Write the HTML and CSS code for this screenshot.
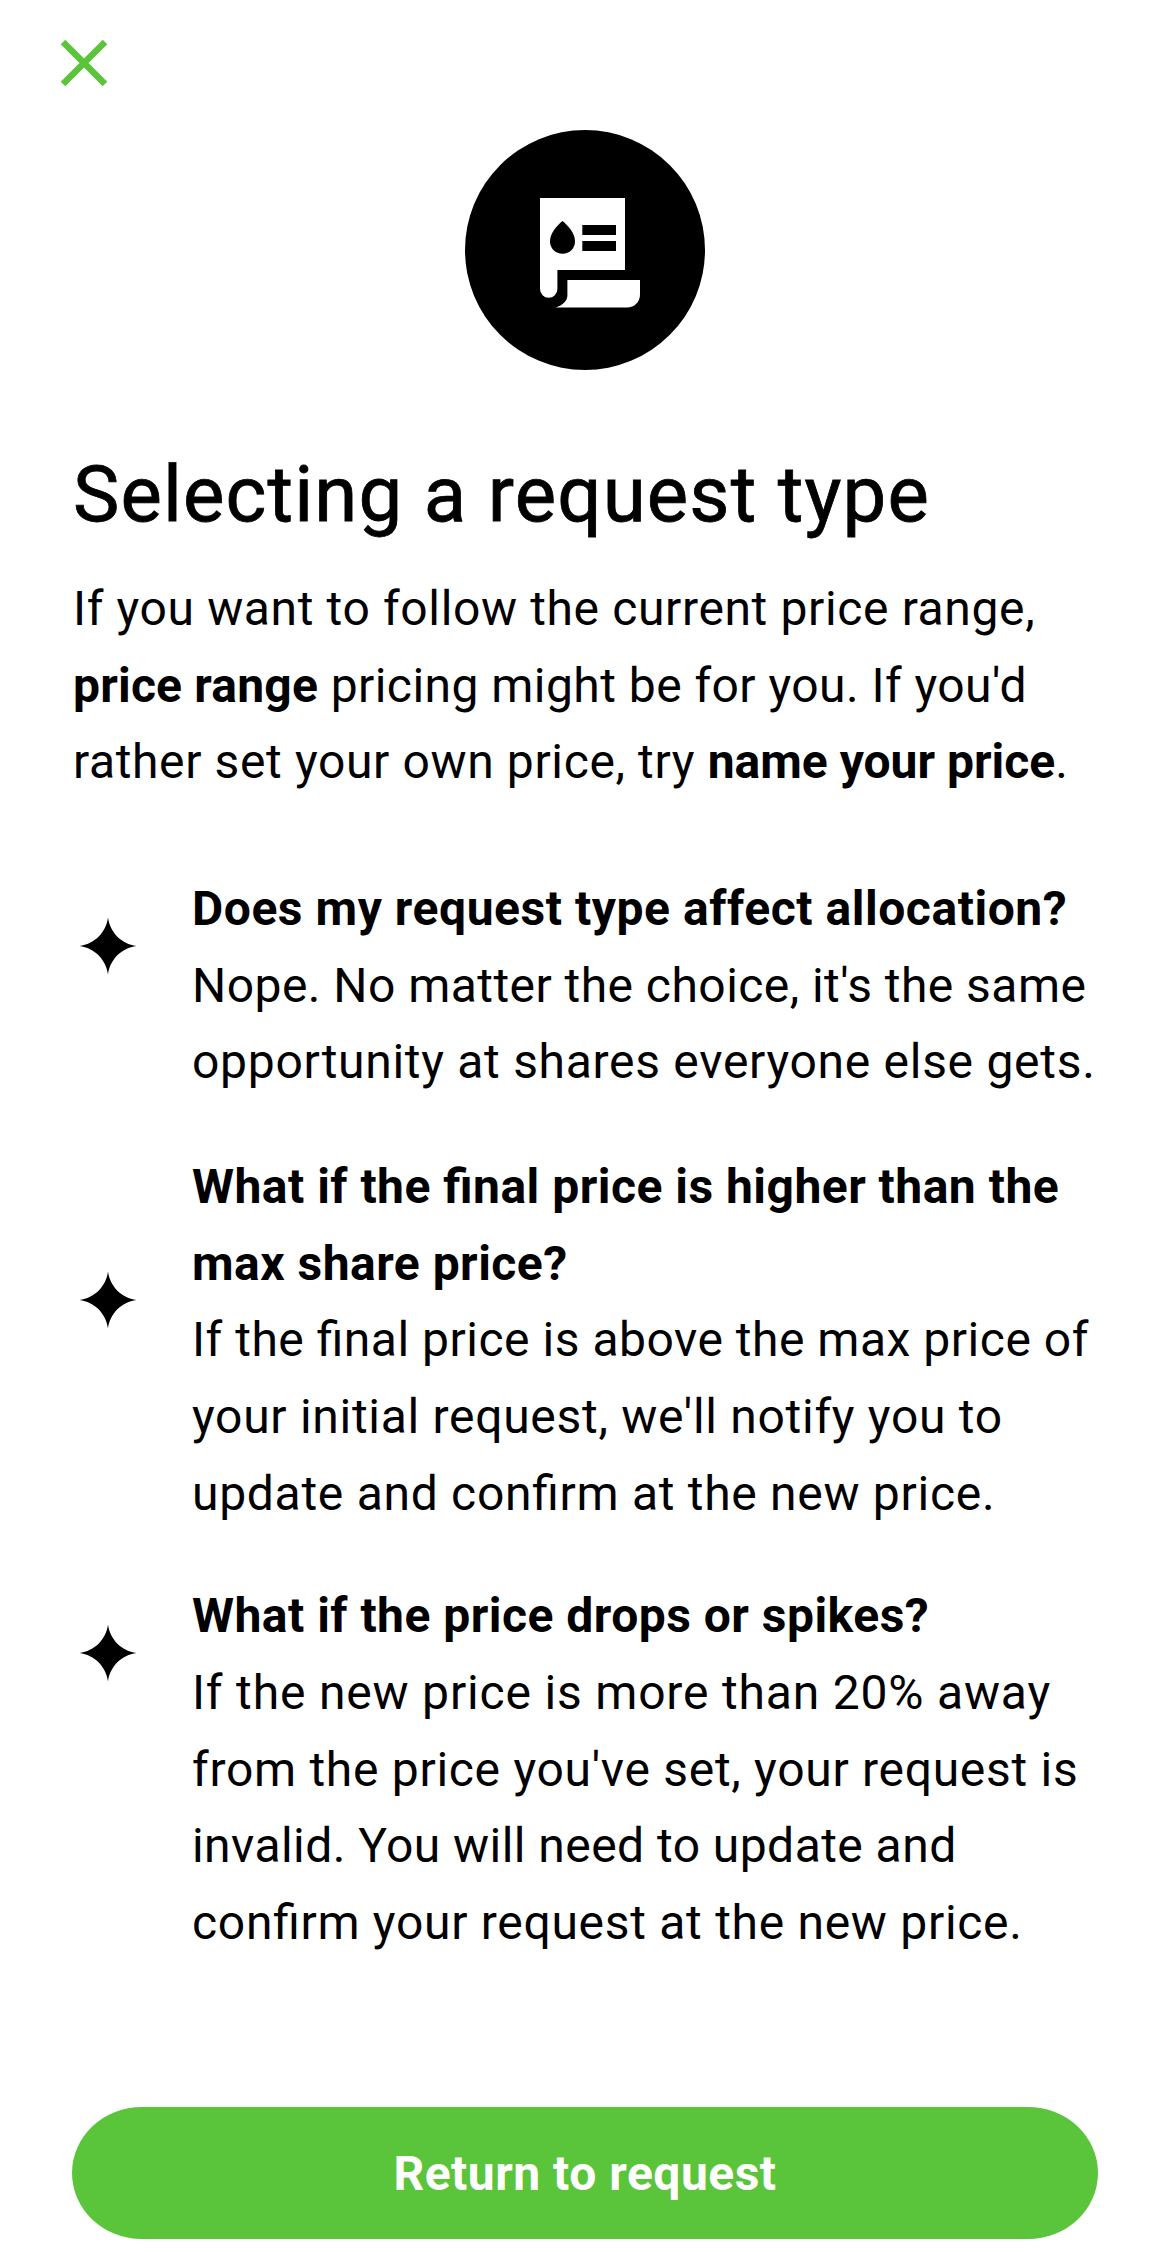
FILE: index.html
```
<!DOCTYPE html>
<html lang="en">
<head>
<meta charset="utf-8">
<title>Selecting a request type</title>
<link rel="stylesheet" href="styles.css">
</head>
<body>
<header class="topbar">
  <button class="close" aria-label="Close">
    <svg width="48" height="48" viewBox="0 0 48 48"><path d="M3 3 45 45M45 3 3 45" fill="none" stroke="#5ac53a" stroke-width="6.5"/></svg>
  </button>
</header>
<main class="content">
  <svg class="hero" width="240" height="240" viewBox="0 0 240 240">
    <circle cx="120" cy="120" r="120" fill="#000"/>
    <path fill="#fff" d="M75 68H160V140H92.4V159a8.7 8.7 0 0 1-17.4 0Z"/>
    <path fill="#fff" d="M102.4 150H175V164.500C175 172 169.500 177.600 162 177.600H90.700C98 175 102.400 171 102.400 165Z"/>
    <path fill="#000" d="M97.500 91C92 95.500 85 103 85 111.500C85 118.500 90.500 123.800 97.500 123.800S110 118.500 110 111.500C110 103 103 95.500 97.500 91Z"/>
    <path fill="#000" d="M117.300 95H151V105H117.300ZM117.300 111H151V121H117.300Z"/>
  </svg>
  <h1 class="title">Selecting a request type</h1>
  <p class="intro">If you want to follow the current price range,<br><b class="term">price range</b> <span class="snug">pricing might be for you. If you'd</span><br>rather set your own price, try <b class="term tight">name your price</b>.</p>
  <ul class="faq">
    <li class="item">
      <svg class="star" width="58" height="58" viewBox="0 0 60 60"><path d="M30 0.500C32 16 44 28 59.500 30C44 32 32 44 30 59.500C28 44 16 32 0.500 30C16 28 28 16 30 0.500Z"/></svg>
      <div>
        <h2 class="question">Does my request type affect allocation?</h2>
        <p class="answer"><span class="snug">Nope. No matter the choice, it's the same</span><br>opportunity at shares everyone else gets.</p>
      </div>
    </li>
    <li class="item item-tall">
      <svg class="star" width="58" height="58" viewBox="0 0 60 60"><path d="M30 0.500C32 16 44 28 59.500 30C44 32 32 44 30 59.500C28 44 16 32 0.500 30C16 28 28 16 30 0.500Z"/></svg>
      <div>
        <h2 class="question snug">What if the final price is higher than the<br>max share price?</h2>
        <p class="answer"><span class="snug-plus">If the final price is above the max price of</span><br>your initial request, we'll notify you to<br>update and confirm at the new price.</p>
      </div>
    </li>
    <li class="item">
      <svg class="star" width="58" height="58" viewBox="0 0 60 60"><path d="M30 0.500C32 16 44 28 59.500 30C44 32 32 44 30 59.500C28 44 16 32 0.500 30C16 28 28 16 30 0.500Z"/></svg>
      <div>
        <h2 class="question snug">What if the price drops or spikes?</h2>
        <p class="answer"><span class="airy">If the new price is more than 20% away</span><br>from the price you've set, your request is<br><span class="snug">invalid. You will need to update and</span><br>confirm your request at the new price.</p>
      </div>
    </li>
  </ul>
  <button class="cta">Return to request</button>
</main>
</body>
</html>
```
FILE: styles.css
```
* { box-sizing: border-box; margin: 0; padding: 0; }

body {
  background: #fff;
  color: #000;
  font: 400 48px/76.67px Roboto, "Liberation Sans", sans-serif;
  font-feature-settings: "liga" 1;
  white-space: nowrap;
}

button { border: 0; background: none; font: inherit; }

.topbar { height: 130px; padding: 39px 60px 0; }
.close { display: block; width: 48px; height: 48px; }
.close svg { display: block; }

.content {
  display: flex;
  flex-direction: column;
  padding: 0 72px;
}

.hero { align-self: center; }

.title {
  margin-top: 77px;
  padding-left: 1px;
  font-size: 78px;
  font-weight: 400;
  line-height: 96px;
  letter-spacing: 1.13px;
  -webkit-text-stroke: 0.8px #000;
}

.intro { margin-top: 28px; padding-left: 1px; letter-spacing: 0.63px; }
.term { font-weight: 700; letter-spacing: 0.2px; }
.tight { letter-spacing: 0; }
.snug { letter-spacing: 0.45px; }
.snug-plus { letter-spacing: 0.51px; }
.airy { letter-spacing: 0.82px; }

.faq { margin-top: 70px; list-style: none; }

.item {
  display: grid;
  grid-template-columns: 120px 1fr;
  margin-bottom: 48px;
}
.item-tall { margin-bottom: 46px; }

.star { margin: 46px 0 0 7px; }
.item-tall .star { margin-top: 121.500px; }

.question {
  font-size: 48px;
  font-weight: 700;
  letter-spacing: 0.55px;
}
.question.snug { letter-spacing: 0.48px; }
.answer { letter-spacing: 0.71px; }

.cta {
  height: 132px;
  margin-top: 97.3px;
  padding-top: 2px;
  border-radius: 70px / 66px;
  background: #5ac53a;
  color: #fff;
  font-weight: 700;
  letter-spacing: 0.5px;
}
```
